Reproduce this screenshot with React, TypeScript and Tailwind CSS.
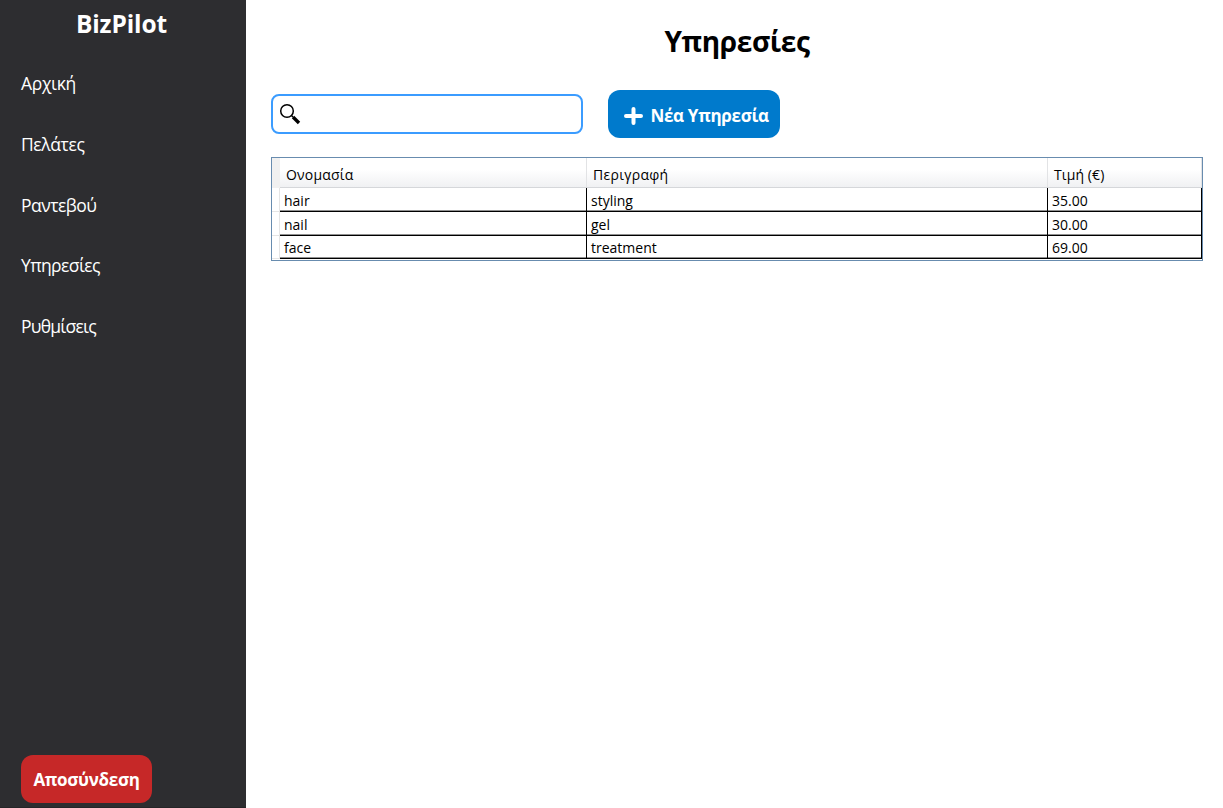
const nav = [
  { label: "Αρχική", tracking: "tracking-[-0.35px]" },
  { label: "Πελάτες", tracking: "tracking-[-0.4px]" },
  { label: "Ραντεβού", tracking: "tracking-[-0.5px]" },
  { label: "Υπηρεσίες", tracking: "tracking-[-0.6px]" },
  { label: "Ρυθμίσεις", tracking: "tracking-[-0.75px]" },
];

const rows = [
  { name: "hair", description: "styling", price: "35.00", h: "h-6" },
  { name: "nail", description: "gel", price: "30.00", h: "h-6" },
  { name: "face", description: "treatment", price: "69.00", h: "h-[23px]" },
];

const headers = [
  { label: "Ονομασία", tracking: "tracking-[0.2px]" },
  { label: "Περιγραφή", tracking: "tracking-[0.3px]" },
  { label: "Τιμή (€)", tracking: "tracking-[0.1px]" },
];

export default function App() {
  return (
    <div className="flex h-[808px] w-[1223px] overflow-hidden bg-white font-['Open_Sans','Noto_Sans',sans-serif] text-black">
      <aside className="flex w-[246px] shrink-0 flex-col border-b border-[#252527] bg-[#2d2d30] pb-1 text-white">
        <h1 className="pt-2 pr-[3px] text-center text-[24.5px] leading-8 font-bold tracking-[-0.1px]">BizPilot</h1>
        <nav className="flex flex-col pt-[14px]">
          {nav.map((n) => (
            <a key={n.label} className={`flex h-[60.7px] items-center pb-[2px] pl-[21px] text-[17.5px] ${n.tracking}`}>
              <span>{n.label}</span>
            </a>
          ))}
        </nav>
        <button className="mt-auto ml-[21px] flex h-12 w-[131px] items-center justify-center rounded-xl bg-[#c62828] pt-[2px] text-[17px] font-bold tracking-[-0.3px]">
          <span>Αποσύνδεση</span>
        </button>
      </aside>
      <main className="flex min-w-0 flex-1 flex-col pr-5 pl-[25px]">
        <h2 className="pt-[21px] text-center text-[28px] leading-10 font-bold tracking-[-0.4px]">Υπηρεσίες</h2>
        <div className="mt-[29px] flex items-center gap-[25px]">
          <div className="flex h-10 w-[312.4px] items-center rounded-lg border-2 border-[#3b9cff] pl-[6px]">
            <svg width="22" height="22" viewBox="0 0 22 22" fill="none" stroke="black">
              <circle cx="8" cy="8" r="6.3" strokeWidth="1.5" />
              <path d="M12.5 12.5L14 14" strokeWidth="1.5" />
              <path d="M14 14L20 20" strokeWidth="3.4" />
            </svg>
          </div>
          <button className="flex h-12 w-[172px] items-center rounded-xl bg-[#007acc] pt-[3px] pl-4 text-[17px] font-bold tracking-[-0.3px] text-white">
            <svg width="19" height="18" viewBox="0 0 19 18" stroke="white" strokeWidth="4" strokeLinecap="round">
              <path d="M9.5 2V16M2 9H17" />
            </svg>
            <span className="pl-[7px]">Νέα Υπηρεσία</span>
          </button>
        </div>
        <div className="mt-[19px] flex w-[932px] flex-col border border-[#688caf] bg-white">
          <div className="flex h-[30px]">
            <div className="w-2 bg-[#f0f0f0]" />
            <div className="grid flex-1 grid-cols-[307px_461px_1fr] border-b border-[#d5d7da] bg-linear-to-b from-white from-40% to-[#f0f1f3]">
              {headers.map((h) => (
                <div key={h.label} className={`flex items-center border-r border-[#e2e3e5] pt-1 pl-[6px] text-sm ${h.tracking}`}>
                  <span>{h.label}</span>
                </div>
              ))}
            </div>
          </div>
          {rows.map((r) => (
            <div key={r.name} className={`flex text-sm ${r.h}`}>
              <div className="w-2 border-r border-b border-[#e5e5e5]" />
              <div className="grid flex-1 grid-cols-[307px_461px_1fr]">
                {[r.name, r.description, r.price].map((c) => (
                  <div key={c} className="flex items-center border-r border-b border-black pt-[2px] pl-[4px] shadow-[inset_0_-1px_0_#909090]">
                    <span>{c}</span>
                  </div>
                ))}
              </div>
            </div>
          ))}
          <div className="h-px" />
        </div>
      </main>
    </div>
  );
}
